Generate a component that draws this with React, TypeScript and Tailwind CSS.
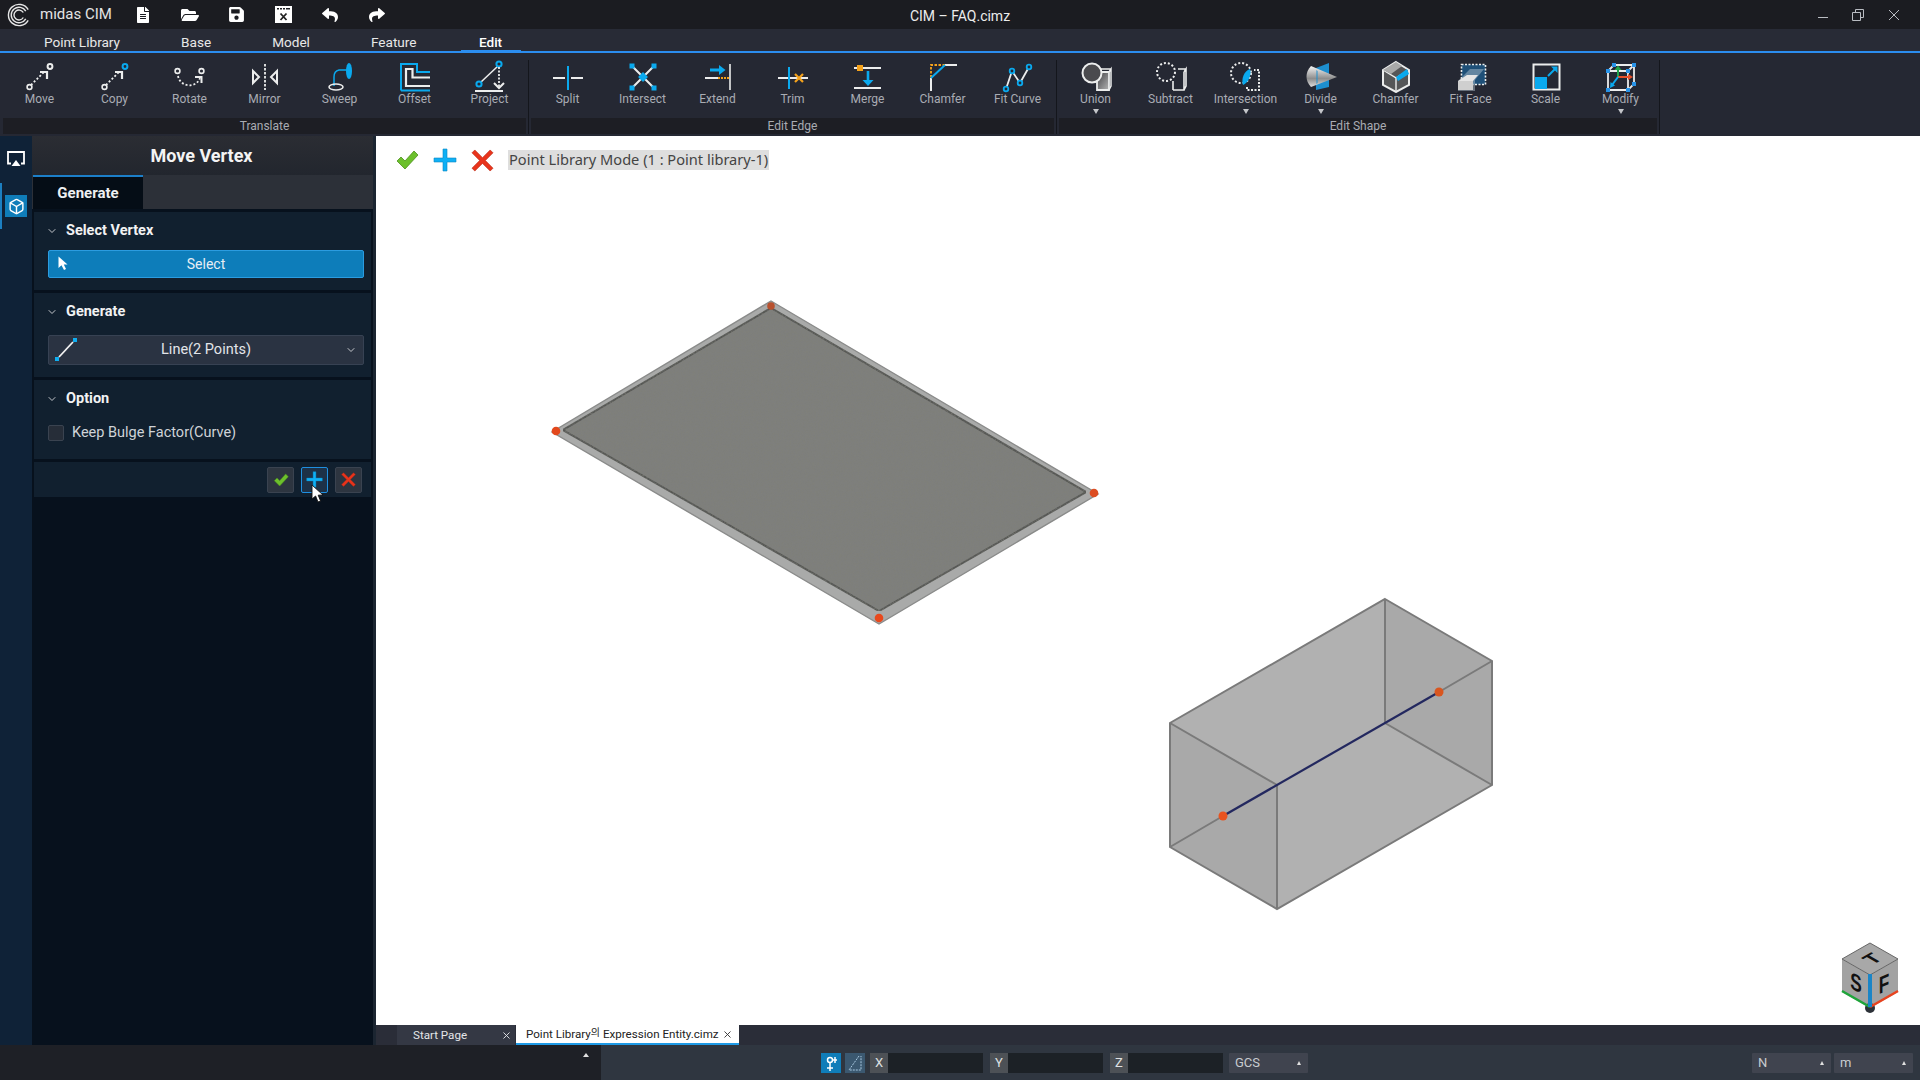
import type { ReactNode } from "react";
import { Box, ChevronDown, X } from "lucide-react";
import { FaFileAlt, FaFolderOpen, FaReply, FaSave, FaShare } from "react-icons/fa";

const W = "#eceded";
const B = "#0aa9ee";
const O = "#f5a21b";

function Ico({ children }: { children: ReactNode }) {
  return (
    <svg width="36" height="36" viewBox="0 0 36 36" fill="none" strokeWidth="1.6">
      {children}
    </svg>
  );
}

const MoveIcon = ({ c = W }: { c?: string }) => (
  <Ico>
    <path d="M9 28 L23 14" stroke={W} strokeWidth="1.8" strokeDasharray="2 2" />
    <circle cx="7.5" cy="30" r="2.4" stroke={W} />
    <circle cx="28" cy="9.5" r="2.4" stroke={c} strokeWidth="2" />
    <path d="M18 15 H25 V22" stroke={W} strokeWidth="2.2" />
  </Ico>
);

const icons: Record<string, ReactNode> = {
  move: <MoveIcon />,
  copy: <MoveIcon c={B} />,
  rotate: (
    <Ico>
      <circle cx="5.5" cy="14" r="2.4" stroke={W} />
      <circle cx="29.5" cy="14" r="2.4" stroke={W} />
      <path d="M6 19 C8 30 24 32 28 21" stroke={W} strokeWidth="1.8" strokeDasharray="2 2" />
      <path d="M23 20 H29.5 V26" stroke={W} strokeWidth="2" />
    </Ico>
  ),
  mirror: (
    <Ico>
      <path d="M18 7 V33" stroke={W} strokeWidth="1.8" strokeDasharray="2.5 1.5" />
      <path d="M6 14 L12 20 L6 26 Z M30 14 L24 20 L30 26 Z" stroke={W} strokeWidth="2" />
    </Ico>
  ),
  sweep: (
    <Ico>
      <ellipse cx="27" cy="14" rx="3" ry="8" fill={B} />
      <path d="M25 13 H17 Q12 14 12 20 V29" stroke={B} strokeWidth="1.5" />
      <ellipse cx="14" cy="30" rx="7" ry="3" stroke={W} />
    </Ico>
  ),
  offset: (
    <Ico>
      <path d="M4 33.5 V7 H20 V15 H33 M4 33.5 H33" stroke={B} strokeWidth="2" />
      <path d="M33 29 H9 V12 H15.5 V20.5 H33" stroke={W} strokeWidth="2.2" />
    </Ico>
  ),
  project: (
    <Ico>
      <path d="M26 9 L9 25" stroke={W} />
      <circle cx="27" cy="7" r="2.6" stroke={B} strokeWidth="2" />
      <circle cx="7" cy="27" r="2.6" stroke={B} strokeWidth="2" />
      <path d="M27 10 V30" stroke={W} strokeWidth="1.8" strokeDasharray="2 1.5" />
      <path d="M22 26 L27 31 L32 26" stroke={W} strokeWidth="2" />
      <path d="M3 34 H31" stroke={W} strokeWidth="2" />
    </Ico>
  ),
  split: (
    <Ico>
      <path d="M3 21 H15 M21 21 H33" stroke={W} strokeWidth="2" />
      <path d="M18 9 V33" stroke={B} strokeWidth="2" />
    </Ico>
  ),
  intersect: (
    <Ico>
      <path d="M8 10 L18 20 L28 10 M8 30 L18 20 L28 30" stroke={W} strokeWidth="2" />
      <rect x="4.5" y="6.5" width="5" height="5" fill={B} />
      <rect x="26.5" y="6.5" width="5" height="5" fill={B} />
      <rect x="4.5" y="28.5" width="5" height="5" fill={B} />
      <rect x="26.5" y="28.5" width="5" height="5" fill={B} />
      <rect x="14.5" y="16.5" width="7" height="7" fill={B} transform="rotate(45 18 20)" />
    </Ico>
  ),
  extend: (
    <Ico>
      <path d="M30 7 V33" stroke={W} />
      <path d="M5 21 H18" stroke={W} strokeWidth="2" />
      <path d="M18 21 H29" stroke={O} strokeWidth="2" strokeDasharray="2 1" />
      <path d="M10 13 H20" stroke={B} strokeWidth="3" />
      <path d="M19 8 L25.5 13 L19 18 Z" fill={B} />
    </Ico>
  ),
  trim: (
    <Ico>
      <path d="M3 21 H33" stroke={W} strokeWidth="2" />
      <path d="M14 10 V32" stroke={B} strokeWidth="2" />
      <path d="M20 17 L28 25 M28 17 L20 25" stroke={O} strokeWidth="2.2" />
    </Ico>
  ),
  merge: (
    <Ico>
      <path d="M4 11 H31 M4 31 H31" stroke={W} strokeWidth="2.2" />
      <rect x="7" y="8" width="6" height="6" fill={O} />
      <path d="M18 14 V24" stroke={B} strokeWidth="2.6" />
      <path d="M12.5 23 H23.5 L18 29 Z" fill={B} />
    </Ico>
  ),
  chamferEdge: (
    <Ico>
      <path d="M20 8 H32 M6 21 V34" stroke={W} strokeWidth="2" />
      <path d="M20 8 H6 V21" stroke={O} strokeWidth="1.8" strokeDasharray="2.5 1.5" />
      <path d="M20 8 L6 21" stroke={B} strokeWidth="2" />
    </Ico>
  ),
  fitCurve: (
    <Ico>
      <path d="M6 32 L12 14 L20 26 L29 10" stroke={W} strokeWidth="1.8" />
      <g fill="#252833" stroke={B} strokeWidth="1.8">
        <circle cx="6" cy="32" r="2.3" />
        <circle cx="12" cy="14" r="2.3" />
        <circle cx="20" cy="26" r="2.3" />
        <circle cx="29" cy="10" r="2.3" />
      </g>
    </Ico>
  ),
  union: (
    <Ico>
      <defs>
        <linearGradient id="unionCube" x1="0" y1="0" x2="1" y2="1">
          <stop offset="0" stopColor="#3e3e42" />
          <stop offset="1" stopColor="#b5b5b5" />
        </linearGradient>
      </defs>
      <path d="M19 15 H31 V33 H19 Z" fill="url(#unionCube)" stroke={W} strokeWidth="1.8" />
      <path d="M31 15 L33 12 V29 L31 33 M22 12 H33" stroke={W} strokeWidth="1.5" />
      <circle cx="14" cy="16" r="9.5" fill="#4a4a4e" stroke={W} strokeWidth="2" />
    </Ico>
  ),
  subtract: (
    <Ico>
      <path d="M20 33 H31 V15 M20 24 V33 M31 15 L33 12 V29 L31 33 M25 12 H33" stroke={W} strokeWidth="1.6" />
      <circle cx="13" cy="15" r="9" stroke={W} strokeWidth="2" strokeDasharray="2 2" />
    </Ico>
  ),
  intersection: (
    <Ico>
      <circle cx="13" cy="16" r="10" stroke={W} strokeWidth="2" strokeDasharray="2 2" />
      <path d="M19 30 V33 H31 V13 H26" stroke={W} strokeWidth="2" strokeDasharray="2 1.5" />
      <path d="M22 12 C24 18 20 26 15 28 C13 22 16 14 22 12 Z" fill={B} />
    </Ico>
  ),
  divide: (
    <Ico>
      <defs>
        <linearGradient id="cone" x1="0" y1="0" x2="0" y2="1">
          <stop offset="0" stopColor="#f5f5f5" />
          <stop offset="0.6" stopColor="#8d8d8d" />
          <stop offset="1" stopColor="#dedede" />
        </linearGradient>
      </defs>
      <path d="M13 11 L26 6 V30 L13 33 Z" fill="#1d8fd0" />
      <path d="M8 9 L34 20 L8 30 C2 24 2 15 8 9 Z" fill="url(#cone)" />
      <path d="M13 13 L15 14 V26 L13 27" fill="#1d8fd0" opacity="0.5" />
    </Ico>
  ),
  chamferShape: (
    <Ico>
      <path d="M18 5 L31 13 V28 L18 35 L5 28 V13 Z" fill="#555658" stroke={W} strokeWidth="2" />
      <path d="M5 13 L18 21 V35 M18 21 L24 17" stroke={W} strokeWidth="1.4" />
      <path d="M18 20 L29 12 L31 17 L20 24 Z" fill={B} />
      <path d="M5 13 L18 5 L24 9 L13 17 Z" fill="#a9a9a9" />
    </Ico>
  ),
  fitFace: (
    <Ico>
      <rect x="8.5" y="7.5" width="24" height="20" fill="#1f5078" stroke={W} strokeDasharray="2 1.5" />
      <path d="M5 24 L17 12 H31 L22 23 V34 H5 Z" fill="#b9c7d2" opacity="0.45" />
      <path d="M5 24 L14 18 H25 L20 24 Z" fill="#e6e6e6" />
      <rect x="5" y="24" width="15" height="9" fill="#cfcfcf" />
    </Ico>
  ),
  scale: (
    <Ico>
      <rect x="5.5" y="7.5" width="26" height="25" stroke={W} strokeWidth="2" />
      <rect x="7" y="20" width="12" height="12" fill={B} />
      <path d="M20 19 L28 11" stroke={B} strokeWidth="2" />
      <path d="M23 9.5 H29.5 V16 Z" fill={B} />
    </Ico>
  ),
  modify: (
    <Ico>
      <path d="M5 14 L11 8 H31 V27 L25 33 H5 Z M5 14 H25 V33 M25 14 L31 8" stroke={W} strokeWidth="1.8" />
      <g fill="#2893e8">
        <rect x="9" y="6" width="4" height="4" />
        <rect x="29" y="6" width="4" height="4" />
        <rect x="3" y="12" width="4" height="4" />
        <rect x="23" y="12" width="4" height="4" />
        <rect x="29" y="25" width="4" height="4" />
        <rect x="3" y="31" width="4" height="4" />
        <rect x="23" y="31" width="4" height="4" />
      </g>
      <path d="M15 20 V12" stroke="#22a34a" strokeWidth="2" />
      <path d="M11.5 13 L15 8.5 L18.5 13 Z" fill="#22a34a" />
      <path d="M15 20 H26" stroke="#e8502a" strokeWidth="2" />
      <path d="M25 17 L30 20 L25 23 Z" fill="#e8502a" />
      <path d="M15 20 L9 28" stroke={B} strokeWidth="2" />
      <path d="M7 31 L7.5 25 L12 28.5 Z" fill={B} />
    </Ico>
  ),
};

type Item = { label: string; icon: string; menu?: boolean };
const groups: { title: string; items: Item[] }[] = [
  {
    title: "Translate",
    items: [
      { label: "Move", icon: "move" },
      { label: "Copy", icon: "copy" },
      { label: "Rotate", icon: "rotate" },
      { label: "Mirror", icon: "mirror" },
      { label: "Sweep", icon: "sweep" },
      { label: "Offset", icon: "offset" },
      { label: "Project", icon: "project" },
    ],
  },
  {
    title: "Edit Edge",
    items: [
      { label: "Split", icon: "split" },
      { label: "Intersect", icon: "intersect" },
      { label: "Extend", icon: "extend" },
      { label: "Trim", icon: "trim" },
      { label: "Merge", icon: "merge" },
      { label: "Chamfer", icon: "chamferEdge" },
      { label: "Fit Curve", icon: "fitCurve" },
    ],
  },
  {
    title: "Edit Shape",
    items: [
      { label: "Union", icon: "union", menu: true },
      { label: "Subtract", icon: "subtract" },
      { label: "Intersection", icon: "intersection", menu: true },
      { label: "Divide", icon: "divide", menu: true },
      { label: "Chamfer", icon: "chamferShape" },
      { label: "Fit Face", icon: "fitFace" },
      { label: "Scale", icon: "scale" },
      { label: "Modify", icon: "modify", menu: true },
    ],
  },
];

function CheckMark({ size }: { size: number }) {
  return (
    <svg width={size} height={size} viewBox="0 0 24 24">
      <path d="M2 13 L6 9 L10 13 L19 3 L23 7 L10 21 Z" fill="#6cc02c" stroke="#4d8f1c" strokeWidth="0.8" />
    </svg>
  );
}

function PlusMark({ size }: { size: number }) {
  return (
    <svg width={size} height={size} viewBox="0 0 24 24">
      <path d="M10 1 H14 V10 H23 V14 H14 V23 H10 V14 H1 V10 H10 Z" fill="#0fb0f5" stroke="#0c86c0" strokeWidth="0.6" />
    </svg>
  );
}

function CrossMark({ size }: { size: number }) {
  return (
    <svg width={size} height={size} viewBox="0 0 24 24">
      <path d="M1 4 L4 1 L12 9 L20 1 L23 4 L15 12 L23 20 L20 23 L12 15 L4 23 L1 20 L9 12 Z" fill="#e8341c" stroke="#b82612" strokeWidth="0.6" />
    </svg>
  );
}

function TitleBar() {
  return (
    <div className="flex h-[29px] items-center bg-[#1b1c21] text-white">
      <svg width="24" height="24" viewBox="0 0 24 24" fill="none" stroke="#e6e6e6" strokeWidth="1.4" className="ml-[7px]">
        <path d="M21.2 6.7 A10.6 10.6 0 1 0 21.2 17.3" />
        <path d="M18.8 8.1 A7.8 7.8 0 1 0 18.8 15.9" />
        <path d="M16.3 9.5 A5 5 0 1 0 16.3 14.5" />
      </svg>
      <span className="ml-[9px] w-[78px] text-[15px] text-[#e4e4e4]">midas CIM</span>
      <div className="ml-[1px] flex items-center">
        <span className="flex w-[47px] justify-center"><FaFileAlt size={16} /></span>
        <span className="flex w-[47px] justify-center"><FaFolderOpen size={18} /></span>
        <span className="flex w-[47px] justify-center"><FaSave size={17} /></span>
        <span className="flex w-[47px] justify-center">
          <svg width="17" height="17" viewBox="0 0 17 17">
            <path d="M0 0 H17 V17 H0 Z M2 2 V3.5 H4 V2 Z M5 2 V3.5 H7 V2 Z M8 2 V3.5 H10 V2 Z M11 2 V3.5 H15 V2 Z" fill="#fff" fillRule="evenodd" />
            <path d="M5.5 7.5 L11.5 14 M11.5 7.5 L5.5 14" stroke="#222" strokeWidth="1.8" />
          </svg>
        </span>
        <span className="flex w-[46px] justify-center"><FaReply size={16} /></span>
        <span className="flex w-[47px] justify-center"><FaShare size={16} /></span>
      </div>
      <span className="ml-[500px] mt-[4px] w-[120px] text-center text-[14px] text-[#ececec]">CIM – FAQ.cimz</span>
      <div className="ml-auto flex items-center gap-[24px] pr-[20px]">
        <span className="mt-[5px] h-px w-[10px] bg-[#b9bcc2]" />
        <svg width="12" height="12" viewBox="0 0 12 12" fill="none" stroke="#b9bcc2">
          <path d="M.5 3.5 H8.5 V11.5 H.5 Z M3.5 3.5 V.5 H11.5 V8.5 H8.5" />
        </svg>
        <svg width="12" height="12" viewBox="0 0 12 12" stroke="#b9bcc2">
          <path d="M1 1 L11 11 M11 1 L1 11" />
        </svg>
      </div>
    </div>
  );
}

function MenuTabs() {
  const tabs = ["Point Library", "Base", "Model", "Feature", "Edit"];
  return (
    <div className="flex h-[24px] gap-[27px] border-b-2 border-[#2b8def] bg-[#282b36] pl-[27px]">
      {tabs.map((t) =>
        t === "Edit" ? (
          <div key={t} className="-mb-[2px] flex w-[60px] justify-center border-b-[3px] border-[#2b8def] pt-[3px] text-[13.6px] font-medium text-white">
            {t}
          </div>
        ) : (
          <div key={t} className="flex justify-center px-[17px] pt-[3px] text-[13.6px] text-[#e8e8e8]">
            {t}
          </div>
        ),
      )}
    </div>
  );
}

function Ribbon() {
  return (
    <div className="flex h-[83px] bg-[#252833] pl-[2px]">
      {groups.map((g) => (
        <div key={g.title} className="flex">
          <div className="flex flex-col">
            <div className="flex h-[65px]">
              {g.items.map((it, i) => (
                <div key={i} className="flex w-[75px] flex-col items-center pt-[4px]">
                  <div className="h-[36px]">{icons[it.icon]}</div>
                  <span className="-mt-[1px] text-[12px] leading-[14px] text-[#a9acb3]">{it.label}</span>
                  {it.menu && <span className="mt-[3px] h-0 w-0 border-x-[3px] border-t-[5px] border-x-transparent border-t-[#c4c6ca]" />}
                </div>
              ))}
            </div>
            <div className="mx-[1px] flex h-[16px] items-center justify-center bg-[#1d1e24] text-[12px] text-[#a9acb3]">
              {g.title}
            </div>
          </div>
          <div className="mx-[1px] mt-[7px] h-[74px] w-px bg-[#14161c]" />
        </div>
      ))}
    </div>
  );
}

function SideRail() {
  return (
    <div className="flex w-[32px] flex-col items-center bg-[#0f2237]">
      <svg width="18" height="16" viewBox="0 0 18 16" fill="none" className="mt-[15px]">
        <path d="M4 12.5 H1 V1 H17 V12.5 H14" stroke="#fff" strokeWidth="1.8" />
        <path d="M9 9 L13.5 15 H4.5 Z" fill="#fff" />
      </svg>
      <div className="mt-[16px] flex h-[46px] w-full items-center justify-center border-l-2 border-[#1c7fc0]">
        <div className="-ml-[2px] flex h-[22px] w-[22px] items-center justify-center bg-[#0f7db9]">
          <Box size={17} color="#fff" strokeWidth={2} />
        </div>
      </div>
    </div>
  );
}

function Section({ title, children }: { title: string; children: ReactNode }) {
  return (
    <div className="mx-[2px] mb-[3px] bg-[#11202f] pl-[14px] pr-[7px]">
      <div className="flex h-[38px] items-center text-[14.5px] font-bold text-[#f1f2f3]">
        <ChevronDown size={12} color="#c4c7cc" className="mr-[8px] ml-[-2px]" />
        <span>{title}</span>
      </div>
      {children}
    </div>
  );
}

function Panel() {
  return (
    <div className="flex w-[341px] flex-col bg-[#07111d]">
      <div className="flex h-[39px] items-center justify-center bg-gradient-to-b from-[#2b2d33] to-[#22262e] pr-[2px] text-[18px] font-bold text-[#f4f4f4]">
        Move Vertex
      </div>
      <div className="mb-[3px] flex h-[34px] bg-[#2c3038]">
        <div className="ml-px flex w-[110px] items-center justify-center border-t-2 border-[#1c7fc9] bg-[#050d16] text-[15px] font-bold text-[#eef0f2]">
          Generate
        </div>
      </div>
      <Section title="Select Vertex">
        <div className="relative mb-[12px] flex h-[28px] items-center justify-center rounded-[2px] border border-[#2b9ce0] bg-[#0d7dba] text-[14px] text-[#e6eef4]">
          <svg width="10" height="15" viewBox="0 0 10 15" className="absolute left-[9px] top-[5px]">
            <path d="M0.5 0.5 V12 L3.5 9.2 L6 14 L8 13 L5.8 8.5 L9.5 8.5 Z" fill="#fff" />
          </svg>
          Select
        </div>
      </Section>
      <Section title="Generate">
        <div className="relative mb-[12px] mt-[4px] flex h-[30px] items-center justify-center rounded-[2px] border border-[#374253] bg-[#2a3342] text-[14.5px] text-[#e2e5e9]">
          <svg width="26" height="26" viewBox="0 0 26 26" className="absolute left-[4px] top-[1px]">
            <path d="M6 20 L20 5" stroke="#f2f2f2" strokeWidth="1.8" />
            <rect x="2" y="20" width="4" height="4" fill="#10aef0" />
            <rect x="20" y="1" width="4" height="4" fill="#10aef0" />
          </svg>
          Line(2 Points)
          <ChevronDown size={12} color="#c4c7cc" className="absolute right-[6px] top-[8px]" />
        </div>
      </Section>
      <Section title="Option">
        <div className="flex h-[41px] items-start pt-[7px] text-[14.5px] text-[#cfd3d8]">
          <span className="mr-[8px] h-[16px] w-[16px] rounded-[2px] border border-[#3a4350] bg-[#262d38]" />
          <span className="leading-[16px]">Keep Bulge Factor(Curve)</span>
        </div>
      </Section>
      <div className="relative mx-[2px] flex h-[35px] items-center justify-end gap-[7px] bg-[#11202f] pr-[9px]">
        <span className="flex h-[26px] w-[27px] items-center justify-center rounded-[2px] border border-[#3a4350] bg-[#2d3540]"><CheckMark size={16} /></span>
        <span className="flex h-[26px] w-[27px] items-center justify-center rounded-[2px] border border-[#1f8fe0] bg-[#1d3147]"><PlusMark size={17} /></span>
        <span className="flex h-[26px] w-[27px] items-center justify-center rounded-[2px] border border-[#3a4350] bg-[#2d3540]"><CrossMark size={15} /></span>
        <svg width="13" height="19" viewBox="0 0 13 19" className="absolute left-[277px] top-[22px]">
          <path d="M1 1 V15 L4.6 12 L7 18 L9.6 17 L7.2 11.2 L12 11 Z" fill="#fff" stroke="#111" strokeWidth="0.9" />
        </svg>
      </div>
    </div>
  );
}

function Scene() {
  return (
    <svg viewBox="376 136 1544 889" className="absolute inset-0 h-full w-full">
      <defs>
        <filter id="grain" x="0" y="0" width="100%" height="100%">
          <feTurbulence type="fractalNoise" baseFrequency="0.6" numOctaves="3" seed="4" />
          <feColorMatrix values="0 0 0 0 0.22  0 0 0 0 0.22  0 0 0 0 0.2  0 0 0 1.1 -0.42" />
          <feComposite in2="SourceGraphic" operator="in" />
          <feMerge>
            <feMergeNode in="SourceGraphic" />
            <feMergeNode />
          </feMerge>
        </filter>
      </defs>
      {/* plate */}
      <polygon points="771,301 1098,494 879,624 552,432" fill="#a9aaa9" stroke="#8a8b8a" strokeWidth="1.4" />
      <polygon points="771,308 1086,492 879,611 563,430" fill="#7e7f7c" stroke="#575855" strokeWidth="2" filter="url(#grain)" />
      <g>
        <circle cx="771" cy="306" r="3.8" fill="#b8512e" />
        <circle cx="556" cy="431" r="4.3" fill="#e2481d" />
        <circle cx="1094" cy="493" r="4.3" fill="#dc4d22" />
        <circle cx="879" cy="618" r="4.3" fill="#e8481c" />
      </g>
      {/* box */}
      <polygon points="1385,599 1492,661 1492,785 1277,909 1170,847 1170,723" fill="#b1b1b1" />
      <polygon points="1170,723 1277,785 1277,909 1170,847" fill="#a9a9a9" />
      <polygon points="1385,599 1492,661 1492,785 1385,723" fill="#a9a9a9" />
      <g stroke="#7a7a7a" strokeWidth="2" fill="none">
        <polygon points="1385,599 1492,661 1492,785 1277,909 1170,847 1170,723" />
        <path d="M1170 723 L1277 785 V909 M1385 599 V723 L1492 785 M1170 847 L1223 816 M1439 692 L1492 661" />
      </g>
      <path d="M1223 816 L1439 692" stroke="#23285f" strokeWidth="2.2" />
      <circle cx="1223" cy="816" r="4.5" fill="#e8531f" />
      <circle cx="1439" cy="692" r="4.5" fill="#d9561f" />
      {/* view cube */}
      <polygon points="1870,943 1898,959 1870,975 1842,959" fill="#a8a8a8" />
      <polygon points="1842,959 1870,975 1870,1008 1842,992" fill="#a2a2a2" />
      <polygon points="1898,959 1870,975 1870,1008 1898,992" fill="#a2a2a2" />
      <path d="M1870 943 L1898 959 L1870 975 L1842 959 Z" stroke="#666" fill="none" />
      <circle cx="1870" cy="1008" r="5" fill="#2c3138" />
      <path d="M1842 991 L1870 1007" stroke="#1fa53a" strokeWidth="2.5" />
      <path d="M1898 991 L1870 1007" stroke="#e8431f" strokeWidth="2.5" />
      <path d="M1870 974 V1007" stroke="#1a85c7" strokeWidth="4" />
      <text textAnchor="middle" fontFamily="Liberation Sans" fontWeight="700" fontSize="24" fill="#111" transform="matrix(0.72 0.3 0 1 1856 991)">S</text>
      <text textAnchor="middle" fontFamily="Liberation Sans" fontWeight="700" fontSize="24" fill="#111" transform="matrix(0.72 -0.3 0 1 1884 992)">F</text>
      <text textAnchor="middle" fontFamily="Liberation Sans" fontWeight="700" fontSize="20" fill="#111" transform="matrix(0.866 -0.5 0.866 0.5 1878 962)">T</text>
    </svg>
  );
}

function Viewport() {
  return (
    <div className="relative flex-1 bg-white">
      <Scene />
      <div className="relative flex items-center pl-[19px] pt-[12px]">
        <CheckMark size={24} />
        <span className="ml-[14px]"><PlusMark size={24} /></span>
        <span className="ml-[14px]"><CrossMark size={23} /></span>
        <span className="ml-[14px] flex h-[20px] items-center whitespace-nowrap bg-[#dedede] px-[1px] text-[14.6px] text-[#444] [font-family:'Noto_Sans',sans-serif]">
          Point Library Mode (1 : Point library-1)
        </span>
      </div>
    </div>
  );
}

function DocTabs() {
  return (
    <div className="flex h-[20px] bg-[#2a2d38] pl-[21px] text-[11.6px]">
      <div className="flex w-[118px] items-center justify-between bg-[#343844] pl-[16px] pr-[3px] pt-px text-[#e4e6e9]">
        Start Page
        <X size={11} color="#e4e6e9" />
      </div>
      <div className="ml-px flex w-[223px] items-center justify-between whitespace-nowrap border-b-2 border-[#1e9ae6] bg-white pl-[10px] pr-[6px] pt-px text-[#222]">
        <span>
          Point Library<span className="relative -top-[2px] text-[10px] [font-family:'Noto_Sans_CJK_KR',sans-serif]">의</span> Expression Entity.cimz
        </span>
        <X size={11} color="#333" />
      </div>
    </div>
  );
}

function Field({ label }: { label: string }) {
  return (
    <div className="flex h-[20px]">
      <span className="flex w-[18px] items-center justify-center bg-[#4d5156] text-[13px] text-[#dfe1e3]">{label}</span>
      <span className="w-[95px] bg-[#1c2126]" />
    </div>
  );
}

function Combo({ label, w }: { label: string; w: string }) {
  return (
    <div className={`flex h-[20px] items-center justify-between rounded-[1px] bg-[#40444f] pl-[6px] pr-[7px] text-[13px] text-[#c9ccd0] ${w}`}>
      {label}
      <span className="h-0 w-0 border-x-[2.5px] border-b-[4px] border-x-transparent border-b-[#e0e0e0]" />
    </div>
  );
}

function StatusBar() {
  return (
    <div className="flex h-[35px]">
      <div className="flex w-[601px] justify-end bg-[#1e2026] pr-[12px] pt-[8px]">
        <span className="h-0 w-0 border-x-[3px] border-b-[4px] border-x-transparent border-b-[#e0e0e0]" />
      </div>
      <div className="flex flex-1 items-center bg-[#2f3640] pl-[220px] pr-[7px]">
        <span className="flex h-[20px] w-[20px] items-center justify-center bg-[#0f7db9]">
          <svg width="14" height="18" viewBox="0 0 14 18" fill="none" stroke="#fff" strokeWidth="1.5">
            <circle cx="6" cy="6" r="2.5" />
            <path d="M6 9 V17 M3 14 H9 M9 6 H13 M11 3 V9" />
          </svg>
        </span>
        <span className="ml-[4px] flex h-[20px] w-[20px] items-center justify-center bg-[#3b5870]">
          <svg width="14" height="16" viewBox="0 0 14 16" fill="none" stroke="#a9c8e0">
            <path d="M11 1 L1 15 H13 V1" strokeDasharray="2 1" />
          </svg>
        </span>
        <span className="ml-[5px]"><Field label="X" /></span>
        <span className="ml-[7px]"><Field label="Y" /></span>
        <span className="ml-[7px]"><Field label="Z" /></span>
        <span className="ml-[6px]"><Combo label="GCS" w="w-[79px]" /></span>
        <span className="ml-auto"><Combo label="N" w="w-[79px]" /></span>
        <span className="ml-[3px]"><Combo label="m" w="w-[79px]" /></span>
      </div>
    </div>
  );
}

export default function App() {
  return (
    <div className="flex h-[1080px] w-[1920px] flex-col overflow-hidden bg-[#07111d] [font-family:Roboto,sans-serif]">
      <TitleBar />
      <MenuTabs />
      <Ribbon />
      <div className="flex min-h-0 flex-1">
        <SideRail />
        <Panel />
        <div className="w-[3px] bg-[#1b2531]" />
        <div className="flex flex-1 flex-col">
          <Viewport />
          <DocTabs />
        </div>
      </div>
      <StatusBar />
    </div>
  );
}
